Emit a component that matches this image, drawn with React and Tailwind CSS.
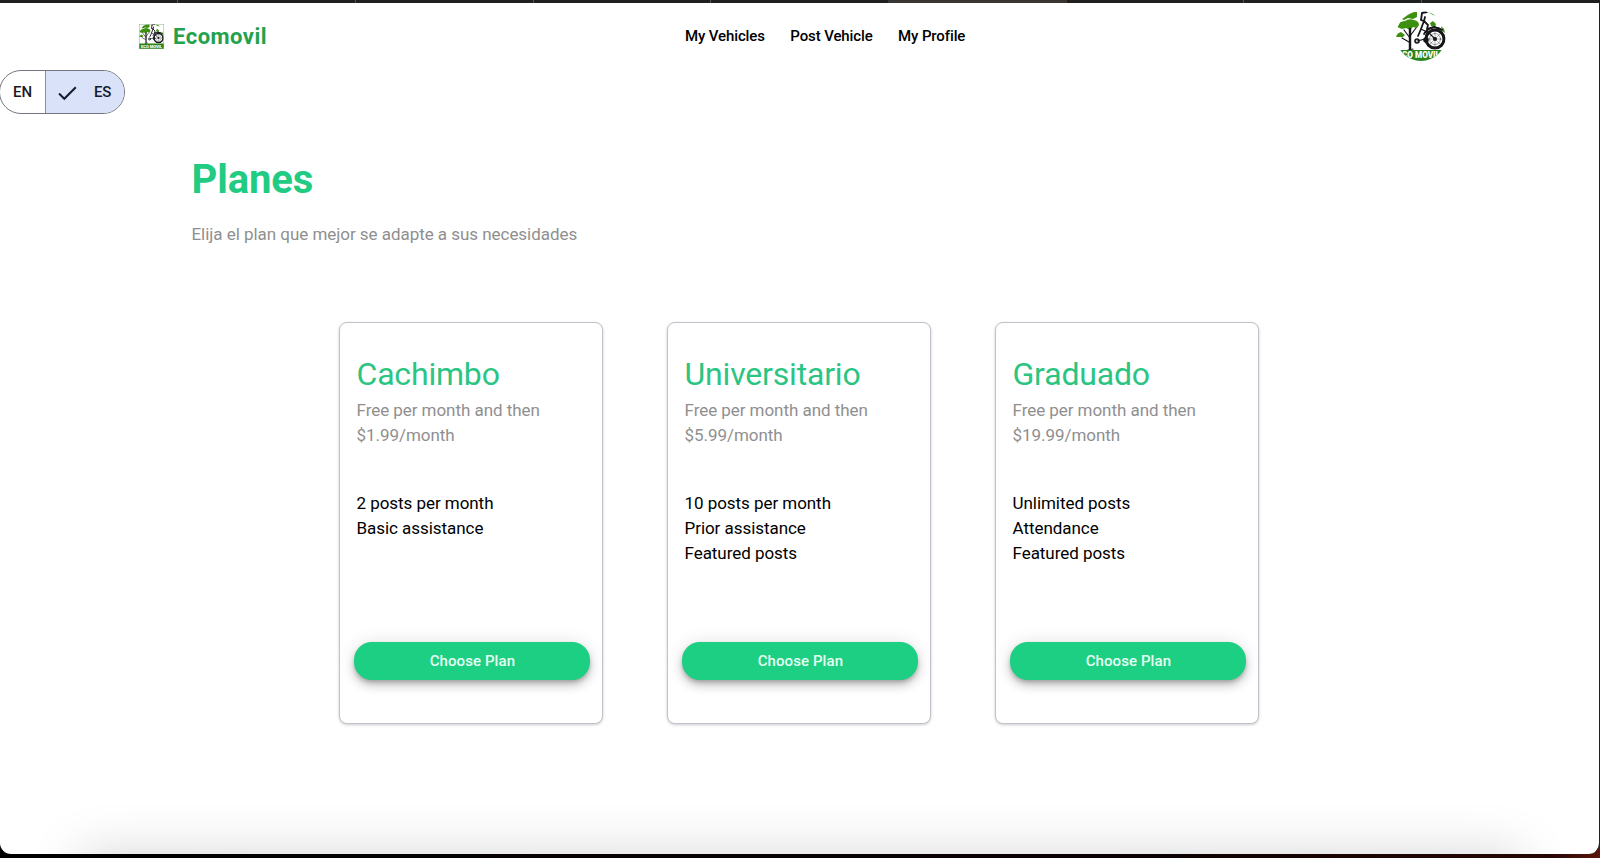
const plans = [
  { name: 'Cachimbo', price: '$1.99/month', features: ['2 posts per month', 'Basic assistance'] },
  { name: 'Universitario', price: '$5.99/month', features: ['10 posts per month', 'Prior assistance', 'Featured posts'] },
  { name: 'Graduado', price: '$19.99/month', features: ['Unlimited posts', 'Attendance', 'Featured posts'] },
];

function BikeTree() {
  return (
    <>
      <rect width="50" height="50" fill="#fff" />
      <g fill="#3d8f10">
        <path d="M5 8 Q8 2 15 1 L21 1 V6 L17 8 L12 7 L8 9Z" />
        <path d="M1 16 Q3 10 9 10 Q13 7 18 9 Q23 10 23 14 L21 17 L17 16 L14 19 L10 17 L6 18Z" />
        <path d="M0 26 Q1 22 5 21 L9 24 L7 26 L3 26Z" />
        <path d="M34 12 L37 10 L40 13 L39 16 L35 15Z" />
        <path d="M45 15 L48 18 L49 22 L46 20Z" />
        <path d="M32 1 L38 2 L42 5 L37 4Z" />
      </g>
      <g fill="none" stroke="#17151a" strokeLinecap="round">
        <path d="M14 38 V18" strokeWidth="2.4" />
        <path d="M14 27 L8 19 M14 25 L20 17 M13 31 L6 27 M12 39 L17 38" strokeWidth="1.2" />
        <path d="M26 2 L25 9 L28 10 L29 6 M26 2 L31 1" strokeWidth="1.8" />
        <path d="M28 10 L32 14 L31 18 M28 10 L25 18 L22 25 M31 18 L38 16 L44 18" strokeWidth="1.8" />
        <path d="M25 18 L31 21 L29 28 L21 30 M31 20 L38 27" strokeWidth="1.2" />
        <path d="M28 23 A12 12 0 0 1 46 19" strokeWidth="1.8" />
        <circle cx="39" cy="28" r="9" strokeWidth="3" />
        <circle cx="39" cy="28" r="5.5" strokeWidth=".4" />
        <path d="M39 20V36M31 28H47M33 22L45 34M45 22L33 34" strokeWidth=".35" />
        <circle cx="30" cy="29" r="1.9" strokeWidth="1.8" />
        <circle cx="21" cy="30" r="2" strokeWidth="1.6" />
      </g>
      <circle cx="39" cy="28" r="2" fill="#17151a" />
      <rect x="0" y="39" width="50" height="11" fill="#29851b" />
    </>
  );
}

function Logo() {
  return (
    <svg className="size-[25px] shrink-0 overflow-visible" viewBox="0 0 50 50">
      <BikeTree />
      <text x="4" y="47" textLength="42" lengthAdjust="spacingAndGlyphs" fontSize="8" fontWeight="900" fill="#fff" fontFamily="Roboto, sans-serif">ECO MOVIL</text>
      <rect x=".5" y=".5" width="49" height="49" fill="none" stroke="#8fae85" />
    </svg>
  );
}

function Avatar() {
  return (
    <svg className="-mt-px size-[50px] rounded-full" viewBox="0 0 50 50">
      <BikeTree />
      <text x="6" y="47" textLength="38" lengthAdjust="spacingAndGlyphs" fontSize="8.5" fontWeight="900" fill="#fff" fontFamily="Roboto, sans-serif">CO MOVIL</text>
    </svg>
  );
}

function PlanCard({ plan }) {
  return (
    <article className="flex h-[402px] w-[264px] flex-col rounded-lg border border-[#c2c2cc] bg-white pl-[17px] pt-[34px] shadow-[0_1px_3px_rgba(0,0,0,0.2)]">
      <h2 className="-ml-[0.5px] text-[32px] leading-[34px] tracking-[-0.18px] text-[#2bc583]">{plan.name}</h2>
      <p className="-ml-[0.5px] mt-[6.5px] text-[17px] leading-[25.5px] tracking-[-0.05px] text-[#8f8f8f]">Free per month and then<br />{plan.price}</p>
      <ul className="-ml-[0.5px] mt-[42.5px] h-[151px] text-[17px] leading-[25.2px] tracking-[-0.05px] text-black">
        {plan.features.map((f) => <li key={f}>{f}</li>)}
      </ul>
      <button className="-ml-[2.6px] h-[38px] w-[236px] rounded-[18px] bg-[#1dcf82] pt-px text-[15px] font-medium tracking-[0.08px] text-[#e5fff2] shadow-[0_3px_5px_-1px_rgba(0,0,0,0.25),0_6px_10px_rgba(0,0,0,0.14),0_1px_18px_rgba(0,0,0,0.12)]">Choose Plan</button>
    </article>
  );
}

export default function App() {
  return (
    <div className="h-[858px] w-[1600px] overflow-hidden bg-[linear-gradient(90deg,#000_0%,#090002_70%,#260603_97%,#5c1509_100%)] font-['Roboto',sans-serif]">
      <div className="flex h-[3px] bg-[#201f1f]">
        <i className="w-[178px] border-r border-[#555]" />
        <i className="w-[178px] border-r border-[#555]" />
        <i className="w-[178px] border-r border-[#555]" />
        <i className="w-[177px] border-r border-[#555]" />
        <i className="w-[177px]" />
        <i className="w-[179px] bg-[#393532]" />
        <i className="w-[177px] border-r border-[#555]" />
        <i className="w-[178px] border-r border-[#555]" />
      </div>
      <div className="relative h-[851px] w-full overflow-hidden rounded-b-[11px] border-r border-[#202020] bg-white">
        <header className="flex h-[66px] items-center pl-[139px]">
          <div className="flex w-[546px] items-center gap-[9px]">
            <Logo />
            <span className="text-[22px] font-bold tracking-[0.5px] text-[#23a14c]">Ecomovil</span>
          </div>
          <nav className="flex w-[711px] gap-[25.5px] text-[15px] font-medium tracking-[-0.12px] text-black">
            <a>My Vehicles</a>
            <a>Post Vehicle</a>
            <a>My Profile</a>
          </nav>
          <Avatar />
        </header>
        <div className="-ml-px mt-px flex h-11 w-[126px] overflow-hidden rounded-full border border-[#74777f] text-[15px] font-medium tracking-[-0.1px] text-[#1a1b1f]">
          <span className="flex w-[46px] items-center justify-center border-r border-[#8b8e98]">EN</span>
          <span className="flex flex-1 items-center bg-[#dae2f9] pl-3 text-[#151b2c]">
            <svg className="mr-[17px] size-[19px]" viewBox="0 0 19 19" fill="none" stroke="currentColor" strokeWidth="2"><path d="M1 10.5 6.3 15.8 17.8 4.3" /></svg>
            ES
          </span>
        </div>
        <main>
          <section className="pl-[191.5px] pt-[41px]">
            <h1 className="text-[40px] font-bold leading-[50px] tracking-[-0.1px] text-[#22cb82]">Planes</h1>
            <p className="mt-4 text-[17px] leading-[26px] tracking-[-0.04px] text-[#8f8f8f]">Elija el plan que mejor se adapte a sus necesidades</p>
          </section>
          <section className="mt-[75px] flex gap-16 pl-[339px]">
            {plans.map((p) => <PlanCard key={p.name} plan={p} />)}
          </section>
        </main>
        <div className="absolute left-[85px] top-[857px] h-10 w-[1430px] shadow-[0_0_52px_6px_rgba(0,0,0,0.17)]" />
      </div>
    </div>
  );
}
